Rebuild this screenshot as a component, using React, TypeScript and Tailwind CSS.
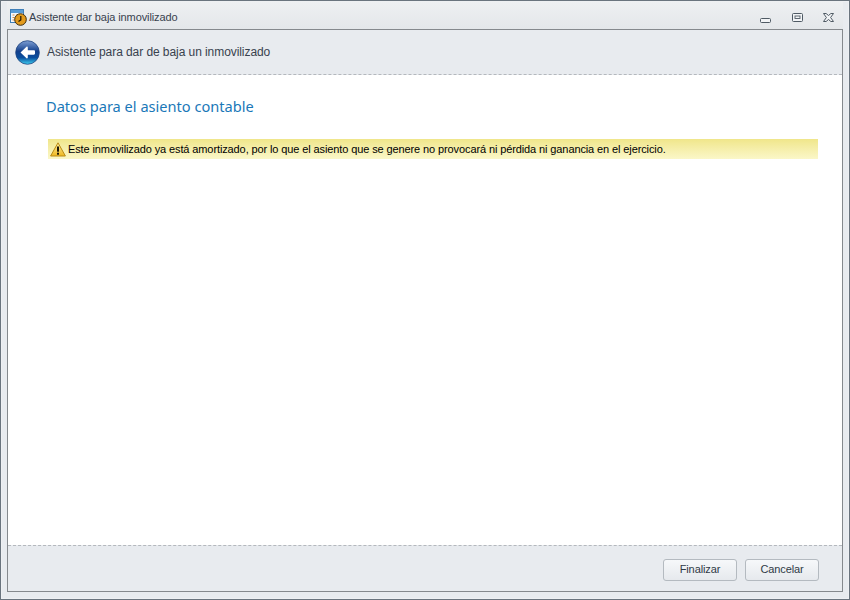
// App.tsx
function AppIcon() {
  return (
    <svg width="17" height="17" viewBox="0 0 17 17" className="shrink-0">
      <rect x="0.5" y="0.5" width="13" height="13" fill="#f4f8fc" stroke="#3f7fb8" />
      <rect x="1" y="1" width="12" height="3" fill="#5a9cd6" />
      <path d="M2.5 6h2M6 6h2M9.5 6h2M2.5 8.5h2M2.5 11h2" stroke="#e08a3c" strokeWidth="1.2" />
      <circle cx="10.5" cy="10.5" r="5.8" fill="#e39a1c" stroke="#3a2a0c" />
      <path d="M10.8 7v4l-2.3 1.6" fill="none" stroke="#1f1504" strokeWidth="1.2" />
    </svg>
  );
}

function BackIcon() {
  return (
    <svg width="25" height="25" viewBox="0 0 25 25" className="shrink-0">
      <defs>
        <linearGradient id="orb" x1="0" y1="0" x2="0" y2="1">
          <stop offset="0" stopColor="#7f9fd4" />
          <stop offset="0.45" stopColor="#123f8c" />
          <stop offset="0.72" stopColor="#0a4e9e" />
          <stop offset="1" stopColor="#3fd0f2" />
        </linearGradient>
      </defs>
      <circle cx="12.5" cy="12.5" r="11.8" fill="url(#orb)" stroke="#1f4480" strokeWidth="0.8" />
      <path
        d="M5.5 12.5 11.5 6.8c.6-.5 1.3-.2 1.3.6v2.9h6c.8 0 1.2.5 1.2 1.2v2c0 .7-.4 1.2-1.2 1.2h-6v2.9c0 .8-.7 1.1-1.3.6z"
        fill="#ffffff"
      />
    </svg>
  );
}

function WarningIcon() {
  return (
    <svg width="16" height="15" viewBox="0 0 16 15" className="shrink-0">
      <defs>
        <linearGradient id="warn" x1="0" y1="0" x2="0" y2="1">
          <stop offset="0" stopColor="#fff0a0" />
          <stop offset="1" stopColor="#efb820" />
        </linearGradient>
      </defs>
      <path d="M8 .8 15.4 14H.6z" fill="url(#warn)" stroke="#b98a16" strokeLinejoin="round" />
      <rect x="7" y="4.5" width="2" height="5.2" fill="#1a1608" />
      <rect x="7" y="10.7" width="2" height="2" fill="#1a1608" />
    </svg>
  );
}

function WindowButtons() {
  return (
    <div className="flex items-center pr-[9px]">
      <svg width="11" height="5" viewBox="0 0 11 5" className="mt-[5px]">
        <rect x="0.5" y="0.5" width="10" height="4" rx="1" fill="#f2f4f6" stroke="#4f5a64" />
      </svg>
      <svg width="11" height="9" viewBox="0 0 11 9" className="ml-[21px]">
        <rect x="0.5" y="0.5" width="10" height="8" rx="1" fill="#f2f4f6" stroke="#4f5a64" />
        <rect x="3" y="3" width="5" height="2.5" fill="#f2f4f6" stroke="#4f5a64" strokeWidth="0.9" />
      </svg>
      <svg width="11" height="9" viewBox="0 0 11 9" className="ml-[20px]">
        <path
          d="M.5 .5h2.6l2.4 2 2.4-2h2.6L7.6 4.5l2.9 4H7.9l-2.4-2-2.4 2H.5l2.9-4z"
          fill="#f2f4f6"
          stroke="#4f5a64"
          strokeLinejoin="round"
        />
      </svg>
    </div>
  );
}

function FooterButton({ label }: { label: string }) {
  return (
    <button className="h-[22px] w-[74px] rounded-[3px] border border-[#b4bac0] bg-gradient-to-b from-[#f6f8fa] to-[#e6e9ed] text-[11px] tracking-[-0.1px] text-[#2f3a46]">
      {label}
    </button>
  );
}

export default function App() {
  return (
    <div className="flex h-[600px] w-[850px] flex-col border border-[#6a747e] bg-[#e8ebef] px-[6px] pb-[7px] font-['Liberation_Sans',sans-serif] [box-shadow:inset_0_0_0_1px_#eef0f3]">
      <div className="flex h-[28px] shrink-0 items-center justify-between bg-gradient-to-b from-[#eef0f2] to-[#e4e7ea] pt-[5px]">
        <div className="flex items-center gap-[2px] pl-[3px]">
          <AppIcon />
          <span className="text-[11px] tracking-[-0.1px] text-[#38424e]">Asistente dar baja inmovilizado</span>
        </div>
        <WindowButtons />
      </div>

      <div className="flex min-h-0 flex-1 flex-col border border-[#85898d]">
        <div className="flex h-[45px] shrink-0 items-center gap-[7px] border-b border-dashed border-[#b4b8bd] pl-[7px]">
          <BackIcon />
          <span className="text-[12px] tracking-[-0.07px] text-[#38424e]">Asistente para dar de baja un inmovilizado</span>
        </div>

        <div className="flex-1 bg-white pl-[38px] pr-[24px] pt-[21px]">
          <h1 className="font-['Noto_Sans',sans-serif] text-[14.6px] leading-[20px] text-[#1a78b8]">Datos para el asiento contable</h1>
          <div className="mt-[23px] ml-[2px] flex h-[20px] items-center gap-[2px] bg-gradient-to-b from-[#f0e68a] to-[#fbf7c8] pl-[2px]">
            <WarningIcon />
            <span className="text-[11px] tracking-[-0.11px] text-black">
              Este inmovilizado ya está amortizado, por lo que el asiento que se genere no provocará ni pérdida ni ganancia en el ejercicio.
            </span>
          </div>
        </div>

        <div className="flex h-[46px] shrink-0 items-center justify-end gap-[8px] border-t border-dashed border-[#b4b8bd] pr-[23px] pt-[2px]">
          <FooterButton label="Finalizar" />
          <FooterButton label="Cancelar" />
        </div>
      </div>
    </div>
  );
}
